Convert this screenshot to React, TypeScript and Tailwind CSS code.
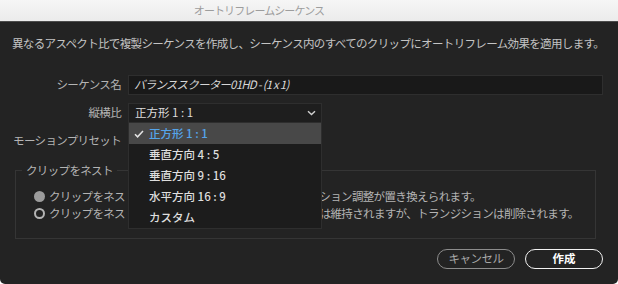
import { useState } from 'react'

const FONT = "font-['Noto_Sans_CJK_JP','Noto_Sans',sans-serif]"

const ASPECTS = ['正方形 1 : 1', '垂直方向 4 : 5', '垂直方向 9 : 16', '水平方向 16 : 9', 'カスタム']

function Label({ children }: { children: React.ReactNode }) {
  return (
    <div className="w-[109px] shrink-0 whitespace-nowrap text-right text-[11.5px] tracking-[-0.65px] text-[#b4b4b4]">
      {children}
    </div>
  )
}

function Radio({ checked, children }: { checked: boolean; children: React.ReactNode }) {
  return (
    <div className="flex h-[17px] items-center gap-[4px] pl-[12px] text-[11.5px] tracking-[-0.65px] text-[#b4b4b4]">
      {checked ? (
        <span className="h-[11px] w-[11px] shrink-0 rounded-full bg-[#9c9c9c]" />
      ) : (
        <span className="h-[11px] w-[11px] shrink-0 rounded-full border-2 border-[#b4b4b4]" />
      )}
      <span className="whitespace-nowrap">{children}</span>
    </div>
  )
}

function App() {
  const [aspect] = useState(0)

  return (
    <div className={`${FONT} h-[284px] w-[618px] overflow-hidden bg-white`}>
      <div className="flex h-full flex-col overflow-hidden rounded-b-[5px] bg-[#232323]">
        {/* title bar */}
        <div className="flex h-[21px] shrink-0 items-center justify-center bg-gradient-to-b from-[#f6f6f6] to-[#ebebeb] pr-[100px] text-[11px] tracking-[-0.9px] text-[#9d9d9d]">
          オートリフレームシーケンス
        </div>
        <div className="h-px shrink-0 bg-[#4c4c4c]" />

        <div className="flex flex-1 flex-col pl-3 pr-[15px]">
          <p className="mt-[13px] h-[16px] whitespace-nowrap text-[11.5px] leading-[16px] tracking-[-0.65px] text-[#c4c4c4]">
            異なるアスペクト比で複製シーケンスを作成し、シーケンス内のすべてのクリップにオートリフレーム効果を適用します。
          </p>

          <div className="mt-[24px] flex flex-col gap-2">
            <div className="flex h-[20px] items-center gap-[7px]">
              <Label>シーケンス名</Label>
              <div className="flex h-[20px] flex-1 items-center border border-[#2e2e2e] bg-[#191919] px-[5px] text-[11.5px] italic tracking-[-0.8px] text-[#d6d6d6]">
                バランススクーター01HD - (1 x 1)
              </div>
            </div>

            <div className="flex h-[20px] items-center gap-[7px]">
              <Label>縦横比</Label>
              <div className="relative">
                <div className="flex h-[20px] w-[194px] items-center justify-between border border-[#2e2e2e] bg-[#1e1e1e] pl-[6px] pr-[5px] text-[11.5px] text-[#dcdcdc]">
                  <span>{ASPECTS[aspect]}</span>
                  <svg width="9" height="6" viewBox="0 0 9 6" fill="none">
                    <path d="M1 1.2 4.5 4.6 8 1.2" stroke="#cfcfcf" strokeWidth="1.4" />
                  </svg>
                </div>
                {/* open list */}
                <div className="absolute left-0 top-full z-10 w-[194px] border border-t-0 border-[#2e2e2e] bg-[#1c1c1c] text-[11.5px] font-medium">
                  {ASPECTS.map((a, i) => (
                    <div
                      key={a}
                      className={`flex h-[21px] items-center ${i === aspect ? 'bg-[#484848] text-[#55a4ea]' : 'text-[#dedede]'}`}
                    >
                      <span className="flex w-[20px] justify-center">
                        {i === aspect && (
                          <svg width="10" height="8" viewBox="0 0 10 8" fill="none">
                            <path d="M1 4.2 3.6 6.8 9 1" stroke="#e4e4e4" strokeWidth="1.5" />
                          </svg>
                        )}
                      </span>
                      <span>{a}</span>
                    </div>
                  ))}
                </div>
              </div>
            </div>

            <div className="flex h-[20px] items-center gap-[7px]">
              <Label>モーションプリセット</Label>
            </div>
          </div>

          <fieldset className="ml-[3px] mt-[11px] w-[581px] border border-[#353535] px-[6px] pb-[16px] pt-[10px]">
            <legend className="px-1 text-[11.5px] leading-[16px] tracking-[-0.65px] text-[#b4b4b4]">クリップをネスト</legend>
            <Radio checked>クリップをネストしてオートリフレームを適用し、モーション調整が置き換えられます。</Radio>
            <Radio checked={false}>クリップをネストしません。クリップのモーション調整は維持されますが、トランジションは削除されます。</Radio>
          </fieldset>

          <div className="mt-[10px] flex justify-end gap-[10px]">
            <button className="h-[20px] w-[78px] rounded-full border-[1.5px] border-[#8c8c8c] text-[11.5px] tracking-[-0.5px] text-[#a9a9a9]">
              キャンセル
            </button>
            <button className="h-[20px] w-[78px] rounded-full border-[1.5px] border-[#f2f2f2] text-[11.5px] font-bold text-white">
              作成
            </button>
          </div>
        </div>
      </div>
    </div>
  )
}

export default App
